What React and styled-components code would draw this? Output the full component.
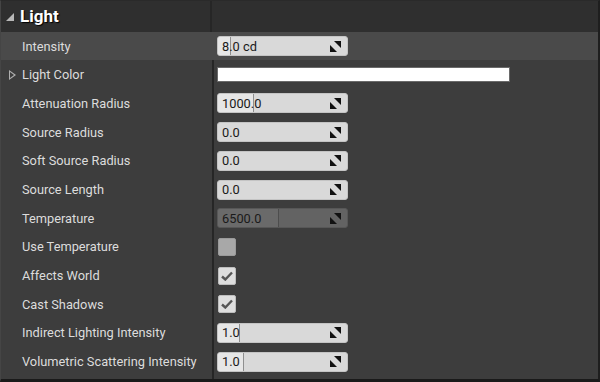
import React from "react";
import styled, { createGlobalStyle } from "styled-components";

const GlobalStyle = createGlobalStyle`
    html, body {
        margin: 0;
        padding: 0;
        background: #3d3d3d;
    }
`;

const rows = [
    { label: "Intensity", type: "num", value: "8.0 cd", fill: 12, selected: true },
    { label: "Light Color", type: "color", expand: true },
    { label: "Attenuation Radius", type: "num", value: "1000.0", fill: 35 },
    { label: "Source Radius", type: "num", value: "0.0", fill: 0 },
    { label: "Soft Source Radius", type: "num", value: "0.0", fill: 0 },
    { label: "Source Length", type: "num", value: "0.0", fill: 0 },
    { label: "Temperature", type: "num", value: "6500.0", fill: 60, disabled: true },
    { label: "Use Temperature", type: "check", checked: false },
    { label: "Affects World", type: "check", checked: true },
    { label: "Cast Shadows", type: "check", checked: true },
    { label: "Indirect Lighting Intensity", type: "num", value: "1.0", fill: 21 },
    { label: "Volumetric Scattering Intensity", type: "num", value: "1.0", fill: 25 },
];

const ResizeIcon = () => (
    <svg width="11" height="11" viewBox="0 0 11 11">
        <polygon points="4,0 11,0 11,7" fill="#111" />
        <polygon points="0,4 0,11 7,11" fill="#111" />
    </svg>
);

const CheckIcon = () => (
    <svg width="12" height="10" viewBox="0 0 12 10">
        <path d="M1 5.5 L4.3 8.5 L11 1.5" stroke="#555" strokeWidth="2.4" fill="none" />
    </svg>
);

const Value = ({ row }) => {
    if (row.type === "color") return <ColorSwatch />;
    if (row.type === "check")
        return <CheckBox $checked={row.checked}>{row.checked && <CheckIcon />}</CheckBox>;
    return (
        <NumBox $disabled={row.disabled}>
            {row.fill > 0 && <Fill $disabled={row.disabled} style={{ width: row.fill }} />}
            <NumText>{row.value}</NumText>
            <ResizeIcon />
        </NumBox>
    );
};

const App = () => (
    <>
        <GlobalStyle />
        <Panel>
            <Header>
                <HeaderLeft>
                    <Collapse />
                    <Title>Light</Title>
                </HeaderLeft>
                <HeaderRight />
            </Header>
            <Body>
                {rows.map((row) => (
                    <Row key={row.label} $selected={row.selected}>
                        <LabelCell>
                            {row.expand && <Expand />}
                            {row.label}
                        </LabelCell>
                        <ValueCell>
                            <Value row={row} />
                        </ValueCell>
                    </Row>
                ))}
            </Body>
        </Panel>
    </>
);

export default App;

const Panel = styled.div`
    width: 600px;
    height: 382px;
    box-sizing: border-box;
    background: #3d3d3d;
    border-top: 1px solid #2a2a2a;
    border-left: 1px solid #454545;
    border-right: 2px solid #1e1e1e;
    border-bottom: 3px solid #1a1a1a;
    display: flex;
    flex-direction: column;
    font-family: Roboto, "Noto Sans", sans-serif;
    overflow: hidden;
`;

const Header = styled.div`
    height: 31px;
    display: flex;
    background: #2f2f2f;
`;

const HeaderLeft = styled.div`
    width: 211px;
    display: flex;
    align-items: center;
    gap: 6px;
    padding-left: 5px;
    box-sizing: border-box;
    border-right: 2px solid #262626;
`;

const HeaderRight = styled.div`
    flex: 1;
`;

const Collapse = styled.span`
    width: 0;
    height: 0;
    border-left: 8px solid transparent;
    border-bottom: 8px solid #b8b8b8;
    margin-top: 2px;
`;

const Title = styled.span`
    color: #ffffff;
    font-size: 17px;
    font-weight: 700;
    text-shadow: 1px 1px 1px #000;
`;

const Body = styled.div`
    flex: 1;
    display: flex;
    flex-direction: column;
    padding-bottom: 3px;
    background: linear-gradient(to right, transparent 211px, #262626 211px, #262626 213px, transparent 213px);
`;

const Row = styled.div`
    height: 28.7px;
    display: flex;
    align-items: center;
    background: ${(p) => (p.$selected ? "#4a4a4a" : "transparent")};
`;

const LabelCell = styled.div`
    width: 213px;
    padding-left: 21px;
    box-sizing: border-box;
    position: relative;
    color: #dcdcdc;
    font-size: 12.8px;
    white-space: nowrap;
`;

const Expand = styled.span`
    position: absolute;
    left: 8px;
    top: 3px;
    width: 0;
    height: 0;
    border-top: 5px solid transparent;
    border-bottom: 5px solid transparent;
    border-left: 7px solid #b0b0b0;

    &::after {
        content: "";
        position: absolute;
        left: -6px;
        top: -3px;
        border-top: 3px solid transparent;
        border-bottom: 3px solid transparent;
        border-left: 4px solid #3d3d3d;
    }
`;

const ValueCell = styled.div`
    flex: 1;
    display: flex;
    align-items: center;
    padding-left: 3px;
`;

const NumBox = styled.div`
    position: relative;
    width: 131px;
    height: 20px;
    box-sizing: border-box;
    border-radius: 3px;
    background: ${(p) => (p.$disabled ? "#636363" : "#d9d9d9")};
    border: 1px solid ${(p) => (p.$disabled ? "#575757" : "#c4c4c4")};
    display: flex;
    align-items: center;
    justify-content: space-between;
    padding: 0 6px 0 4px;
    overflow: hidden;
`;

const Fill = styled.div`
    position: absolute;
    left: 0;
    top: 0;
    bottom: 0;
    background: ${(p) => (p.$disabled ? "#6a6a6a" : "#e6e6e6")};
    border-right: 1px solid ${(p) => (p.$disabled ? "#4d4d4d" : "#8f8f8f")};
`;

const NumText = styled.span`
    position: relative;
    color: #1a1a1a;
    font-size: 12.8px;
`;

const ColorSwatch = styled.div`
    width: 293px;
    height: 15px;
    box-sizing: border-box;
    background: #ffffff;
    border: 1px solid #6a6a6a;
`;

const CheckBox = styled.div`
    width: 16px;
    height: 16px;
    margin-left: 1px;
    border-radius: 2px;
    background: ${(p) => (p.$checked ? "#dedede" : "#a8a8a8")};
    border: 1px solid ${(p) => (p.$checked ? "#bdbdbd" : "#9a9a9a")};
    display: flex;
    align-items: center;
    justify-content: center;
`;
